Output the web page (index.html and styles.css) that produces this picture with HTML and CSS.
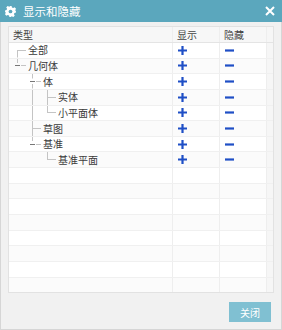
FILE: index.html
```html
<!DOCTYPE html>
<html>
<head>
    <title>显示和隐藏</title>
    <link rel="stylesheet" href="styles.css">
</head>
<body>
    <div class="dialog">
        <div class="titlebar">
            <svg class="gear" width="11" height="11" viewBox="0 0 10 10">
                <path d="M4 0h2l.3 1.4 1.2.5 1.2-.8 1.4 1.4-.8 1.2.5 1.2L10 4v2l-1.4.3-.5 1.2.8 1.2-1.4 1.4-1.2-.8-1.2.5L6 10H4l-.3-1.4-1.2-.5-1.2.8-1.4-1.4.8-1.2-.5-1.2L0 6V4l1.4-.3.5-1.2-.8-1.2 1.4-1.4 1.2.8 1.2-.5z" fill="#fff"/>
                <circle cx="5" cy="5" r="1.7" fill="#5ba7bd"/>
            </svg>
            <span class="title">显示和隐藏</span>
            <svg class="close-x" width="10" height="10" viewBox="0 0 10 10">
                <path d="M1 1L9 9M9 1L1 9" stroke="#fff" stroke-width="2"/>
            </svg>
        </div>

        <div class="content">
            <div class="grid">
                <div class="row head">
                    <div class="cell">类型</div>
                    <div class="cell">显示</div>
                    <div class="cell">隐藏</div>
                    <div class="cell"></div>
                </div>

                <!-- 树形行 -->
                <div class="row">
                    <div class="cell tree"><span class="ind first"></span><span class="name">全部</span></div>
                    <div class="cell"><svg class="plus" width="9" height="9" viewBox="0 0 9 9"><path d="M3.4 0h2.2v3.4H9v2.2H5.6V9H3.4V5.6H0V3.4h3.4z"/></svg></div>
                    <div class="cell"><svg class="minus" width="9" height="9" viewBox="0 0 9 9"><rect x="0" y="3.4" width="9" height="2.2"/></svg></div>
                    <div class="cell"></div>
                </div>
                <div class="row">
                    <div class="cell tree"><span class="ind exp last"></span><span class="name">几何体</span></div>
                    <div class="cell"><svg class="plus" width="9" height="9" viewBox="0 0 9 9"><path d="M3.4 0h2.2v3.4H9v2.2H5.6V9H3.4V5.6H0V3.4h3.4z"/></svg></div>
                    <div class="cell"><svg class="minus" width="9" height="9" viewBox="0 0 9 9"><rect x="0" y="3.4" width="9" height="2.2"/></svg></div>
                    <div class="cell"></div>
                </div>
                <div class="row">
                    <div class="cell tree"><span class="ind"></span><span class="ind exp mid"></span><span class="name">体</span></div>
                    <div class="cell"><svg class="plus" width="9" height="9" viewBox="0 0 9 9"><path d="M3.4 0h2.2v3.4H9v2.2H5.6V9H3.4V5.6H0V3.4h3.4z"/></svg></div>
                    <div class="cell"><svg class="minus" width="9" height="9" viewBox="0 0 9 9"><rect x="0" y="3.4" width="9" height="2.2"/></svg></div>
                    <div class="cell"></div>
                </div>
                <div class="row">
                    <div class="cell tree"><span class="ind"></span><span class="ind pass"></span><span class="ind tee"></span><span class="name">实体</span></div>
                    <div class="cell"><svg class="plus" width="9" height="9" viewBox="0 0 9 9"><path d="M3.4 0h2.2v3.4H9v2.2H5.6V9H3.4V5.6H0V3.4h3.4z"/></svg></div>
                    <div class="cell"><svg class="minus" width="9" height="9" viewBox="0 0 9 9"><rect x="0" y="3.4" width="9" height="2.2"/></svg></div>
                    <div class="cell"></div>
                </div>
                <div class="row">
                    <div class="cell tree"><span class="ind"></span><span class="ind pass"></span><span class="ind elbow"></span><span class="name">小平面体</span></div>
                    <div class="cell"><svg class="plus" width="9" height="9" viewBox="0 0 9 9"><path d="M3.4 0h2.2v3.4H9v2.2H5.6V9H3.4V5.6H0V3.4h3.4z"/></svg></div>
                    <div class="cell"><svg class="minus" width="9" height="9" viewBox="0 0 9 9"><rect x="0" y="3.4" width="9" height="2.2"/></svg></div>
                    <div class="cell"></div>
                </div>
                <div class="row">
                    <div class="cell tree"><span class="ind"></span><span class="ind tee"></span><span class="name">草图</span></div>
                    <div class="cell"><svg class="plus" width="9" height="9" viewBox="0 0 9 9"><path d="M3.4 0h2.2v3.4H9v2.2H5.6V9H3.4V5.6H0V3.4h3.4z"/></svg></div>
                    <div class="cell"><svg class="minus" width="9" height="9" viewBox="0 0 9 9"><rect x="0" y="3.4" width="9" height="2.2"/></svg></div>
                    <div class="cell"></div>
                </div>
                <div class="row">
                    <div class="cell tree"><span class="ind"></span><span class="ind exp last"></span><span class="name">基准</span></div>
                    <div class="cell"><svg class="plus" width="9" height="9" viewBox="0 0 9 9"><path d="M3.4 0h2.2v3.4H9v2.2H5.6V9H3.4V5.6H0V3.4h3.4z"/></svg></div>
                    <div class="cell"><svg class="minus" width="9" height="9" viewBox="0 0 9 9"><rect x="0" y="3.4" width="9" height="2.2"/></svg></div>
                    <div class="cell"></div>
                </div>
                <div class="row">
                    <div class="cell tree"><span class="ind"></span><span class="ind"></span><span class="ind elbow"></span><span class="name">基准平面</span></div>
                    <div class="cell"><svg class="plus" width="9" height="9" viewBox="0 0 9 9"><path d="M3.4 0h2.2v3.4H9v2.2H5.6V9H3.4V5.6H0V3.4h3.4z"/></svg></div>
                    <div class="cell"><svg class="minus" width="9" height="9" viewBox="0 0 9 9"><rect x="0" y="3.4" width="9" height="2.2"/></svg></div>
                    <div class="cell"></div>
                </div>

                <!-- 空行 -->
                <div class="row"><div class="cell"></div><div class="cell"></div><div class="cell"></div><div class="cell"></div></div>
                <div class="row"><div class="cell"></div><div class="cell"></div><div class="cell"></div><div class="cell"></div></div>
                <div class="row"><div class="cell"></div><div class="cell"></div><div class="cell"></div><div class="cell"></div></div>
                <div class="row"><div class="cell"></div><div class="cell"></div><div class="cell"></div><div class="cell"></div></div>
                <div class="row"><div class="cell"></div><div class="cell"></div><div class="cell"></div><div class="cell"></div></div>
                <div class="row"><div class="cell"></div><div class="cell"></div><div class="cell"></div><div class="cell"></div></div>
                <div class="row"><div class="cell"></div><div class="cell"></div><div class="cell"></div><div class="cell"></div></div>
                <div class="row"><div class="cell"></div><div class="cell"></div><div class="cell"></div><div class="cell"></div></div>
            </div>

            <div class="footer">
                <button class="btn-close">关闭</button>
            </div>
        </div>
    </div>
</body>
</html>
```

FILE: styles.css
```css
body {
    margin: 0;
    background: #fff;
    font-family: "Noto Sans CJK SC", "Noto Sans", sans-serif;
}
.dialog {
    width: 282px;
    height: 330px;
    box-sizing: border-box;
    display: flex;
    flex-direction: column;
    background: #f1f1f1;
    border: 1px solid #d6d6d6;
    border-top: none;
}
.titlebar {
    height: 22px;
    margin: 0 -1px;
    background: #5ba7bd;
    display: flex;
    align-items: center;
    padding: 0 7px 0 5px;
    color: #fff;
}
.gear {
    margin-right: 7px;
}
.title {
    flex: 1;
    font-size: 11.5px;
    line-height: 22px;
}
.content {
    flex: 1;
    display: flex;
    flex-direction: column;
    padding: 4px 7px 0 7px;
}
.grid {
    background: #fff;
    border: 1px solid #e2e2e2;
    height: 267px;
    overflow: hidden;
    box-sizing: border-box;
}
.row {
    display: grid;
    grid-template-columns: 164px 47px 47px 1fr;
    height: 15.65px;
    border-bottom: 1px solid #f0f0f0;
    box-sizing: border-box;
}
.row:nth-child(odd) {
    background: #fbfbfb;
}
.row.head {
    height: 16px;
    background: #f7f7f7;
    border-bottom: 1px solid #e4e4e4;
}
.cell {
    border-right: 1px solid #eeeeee;
    font-size: 10px;
    color: #3a3a3a;
    display: flex;
    align-items: center;
    padding-left: 4px;
    line-height: 1;
    overflow: hidden;
}
.head .cell {
    color: #444;
}
.cell:last-child {
    border-right: none;
    background: #f6f6f6;
}
.tree {
    padding-left: 3px;
    align-items: stretch;
}
.name {
    display: flex;
    align-items: center;
    padding-left: 1px;
}
.ind {
    width: 15px;
    flex: none;
}
/* 树的连接线 */
.ind.first {
    background:
        linear-gradient(#c4c4c4, #c4c4c4) 5px 50% / 9px 1px no-repeat,
        linear-gradient(#c4c4c4, #c4c4c4) 5px 100% / 1px 50% no-repeat;
}
.ind.pass {
    background: linear-gradient(#c4c4c4, #c4c4c4) 5px 0 / 1px 100% no-repeat;
}
.ind.tee {
    background:
        linear-gradient(#c4c4c4, #c4c4c4) 5px 50% / 9px 1px no-repeat,
        linear-gradient(#c4c4c4, #c4c4c4) 5px 0 / 1px 100% no-repeat;
}
.ind.elbow {
    background:
        linear-gradient(#c4c4c4, #c4c4c4) 5px 50% / 9px 1px no-repeat,
        linear-gradient(#c4c4c4, #c4c4c4) 5px 0 / 1px 50% no-repeat;
}
.ind.exp.last {
    background:
        linear-gradient(#777, #777) 3px 50% / 5px 1px no-repeat,
        linear-gradient(#c4c4c4, #c4c4c4) 9px 50% / 5px 1px no-repeat,
        linear-gradient(#c4c4c4, #c4c4c4) 5px 0 / 1px 30% no-repeat;
}
.ind.exp.mid {
    background:
        linear-gradient(#777, #777) 3px 50% / 5px 1px no-repeat,
        linear-gradient(#c4c4c4, #c4c4c4) 9px 50% / 5px 1px no-repeat,
        linear-gradient(#c4c4c4, #c4c4c4) 5px 0 / 1px 30% no-repeat,
        linear-gradient(#c4c4c4, #c4c4c4) 5px 100% / 1px 30% no-repeat;
}
.plus, .minus {
    fill: #1f4fc6;
    margin-left: 1px;
}
.footer {
    flex: 1;
    display: flex;
    justify-content: flex-end;
    align-items: flex-start;
    padding-top: 9px;
}
.btn-close {
    width: 42px;
    height: 20px;
    margin-right: 3px;
    border: none;
    background: #80c0d2;
    color: #fff;
    font-family: "Noto Sans CJK SC", sans-serif;
    font-size: 10px;
    padding: 0;
}
```
